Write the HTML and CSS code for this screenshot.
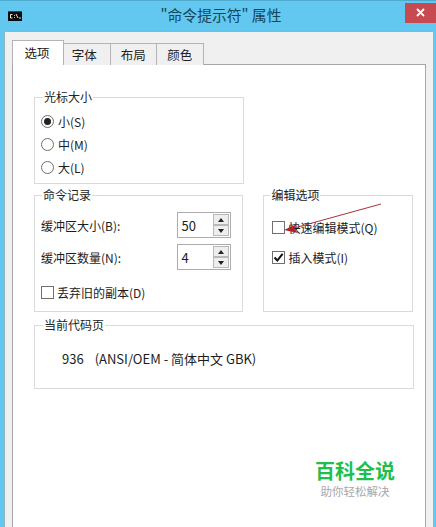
FILE: index.html
```html
<!DOCTYPE html>
<html lang="zh-CN">
<head>
<meta charset="utf-8">
<title>"命令提示符" 属性</title>
<link rel="stylesheet" href="styles.css">
</head>
<body>
<div class="window">
  <header class="titlebar">
    <svg class="app-icon" width="14" height="10" viewBox="0 0 14 10"><rect width="14" height="10" fill="#0b0b0b"/><rect width="14" height="1" fill="#3a4a55"/><path d="M4.500 3.500H2.500v3.500h2M6.500 4v.8M6.500 6v.8M8 3l2 4M11 7h2" fill="none" stroke="#e8e8e8" stroke-width="1"/></svg>
    <div class="title">"命令提示符" 属性</div>
    <div class="close"><svg width="9" height="9" viewBox="0 0 9 9"><path d="M1 1l7 7M8 1l-7 7" stroke="#fff" stroke-width="1.8"/></svg></div>
  </header>
  <div class="client">
    <nav class="tabs">
      <div class="tab active">选项</div>
      <div class="tab">字体</div>
      <div class="tab">布局</div>
      <div class="tab">颜色</div>
    </nav>
    <main class="page">
      <fieldset class="group cursor">
        <legend>光标大小</legend>
        <div class="opts">
          <label class="opt"><span class="radio on"></span>小(S)</label>
          <label class="opt"><span class="radio"></span>中(M)</label>
          <label class="opt"><span class="radio"></span>大(L)</label>
        </div>
      </fieldset>
      <div class="middle">
        <fieldset class="group history">
          <legend>命令记录</legend>
          <div class="field">
            <span class="field-label">缓冲区大小(B):</span>
            <div class="spin"><span class="spin-val">50</span><span class="spin-btns"><i class="up"></i><i class="down"></i></span></div>
          </div>
          <div class="field">
            <span class="field-label">缓冲区数量(N):</span>
            <div class="spin"><span class="spin-val">4</span><span class="spin-btns"><i class="up"></i><i class="down"></i></span></div>
          </div>
          <label class="check discard"><span class="box"></span>丢弃旧的副本(D)</label>
        </fieldset>
        <fieldset class="group edit">
          <legend>编辑选项</legend>
          <label class="check quick"><span class="box"></span>快速编辑模式(Q)</label>
          <label class="check insert"><span class="box"><svg width="11" height="11" viewBox="0 0 11 11"><path d="M1.500 5.500l2.800 3L9.600 1.800" fill="none" stroke="#111" stroke-width="2"/></svg></span>插入模式(I)</label>
        </fieldset>
      </div>
      <fieldset class="group codepage">
        <legend>当前代码页</legend>
        <div class="cp-text"><span class="cp-num">936</span>(ANSI/OEM - 简体中文 GBK)</div>
      </fieldset>
    </main>
  </div>
  <svg class="arrow" width="98" height="32" viewBox="0 0 98 32"><path d="M97 1L10 25" stroke="#a8323c" stroke-width="1" fill="none"/><path d="M0 27L13 21L10 25.500L14 30Z" fill="#b3202c"/></svg>
  <div class="mark">
    <div class="mark-title">百科全说</div>
    <div class="mark-sub">助你轻松解决</div>
  </div>
</div>
</body>
</html>
```
FILE: styles.css
```css
* { box-sizing: border-box; }
html, body { margin: 0; padding: 0; }
body {
  width: 436px;
  height: 527px;
  overflow: hidden;
  font-family: "Noto Sans CJK SC", "Noto Sans", sans-serif;
  font-size: 12px;
  color: #1c1c1c;
}
.window {
  position: relative;
  width: 436px;
  height: 527px;
  background: #62c8f0;
  display: flex;
  flex-direction: column;
  padding: 0 2px 0 4px;
  overflow: hidden;
}
.titlebar {
  height: 31px;
  flex: none;
  display: flex;
  align-items: center;
  position: relative;
  padding: 0 0 4px 8px;
  border-top: 1px solid #4fa9cf;
  margin: 0 -2px 0 -4px;
}
.app-icon { flex: none; margin-top: 4px; }
.title {
  flex: 1;
  text-align: center;
  font-size: 14.800px;
  color: #174558;
  padding: 0 0 0 15px;
  line-height: 20px;
  margin-top: 1px;
}
.close {
  width: 31px;
  height: 20px;
  margin-top: -3px;
  background: #c64a50;
  display: flex;
  align-items: center;
  justify-content: center;
  flex: none;
}
.client {
  flex: 1;
  min-height: 0;
  background: #f0f0f0;
  border-top: 1px solid #8fb4c4;
  border-left: 1px solid #8fb4c4;
  border-right: 1px solid #8fb4c4;
  display: flex;
  flex-direction: column;
  padding: 9px 7px 0 7px;
}
.tabs {
  display: flex;
  height: 24px;
  flex: none;
  align-items: flex-end;
  position: relative;
  z-index: 1;
  margin-bottom: -1px;
}
.tab {
  width: 46.500px;
  height: 22px;
  background: #f0f0f0;
  border: 1px solid #b4b4b4;
  border-left-width: 0;
  border-bottom: 0;
  text-align: center;
  font-size: 12.500px;
  line-height: 22px;
  color: #222;
}
.tab:nth-child(2) { padding-right: 5px; }
.tab.active {
  width: 52px;
  height: 25px;
  background: #fff;
  border-left-width: 1px;
  line-height: 24px;
  padding-right: 2px;
}
.page {
  flex: 1;
  min-height: 0;
  background: #fff;
  border: 1px solid #a6a6a6;
  border-bottom: 0;
  padding: 24px 12px 0 21px;
  display: flex;
  flex-direction: column;
}
.group {
  margin: 0;
  border: 1px solid #dadada;
  padding: 0;
  min-width: 0;
}
.group legend {
  padding: 0 1px;
  margin-left: 8px;
  font-size: 12px;
  line-height: 16px;
  color: #222;
}
.cursor {
  width: 210px;
  height: 95px;
}
.opts {
  display: flex;
  flex-direction: column;
  gap: 6px;
  padding: 8px 0 0 6px;
}
.opt {
  display: flex;
  align-items: center;
  height: 17px;
  gap: 4px;
}
.radio {
  width: 13px;
  height: 13px;
  border: 1px solid #6e6e6e;
  border-radius: 50%;
  background: #fff;
  display: flex;
  align-items: center;
  justify-content: center;
}
.radio.on::after {
  content: "";
  width: 7px;
  height: 7px;
  border-radius: 50%;
  background: #222;
}
.middle {
  display: flex;
  gap: 20px;
  margin-top: 3px;
}
.history {
  width: 210px;
  height: 125px;
  padding: 9px 11px 0 6px;
}
.group.history legend { margin-left: 1px; }
.edit {
  width: 150px;
  height: 125px;
  padding: 16px 0 0 8px;
}
.group.edit legend { margin-left: -2px; }
.field {
  display: flex;
  align-items: center;
  justify-content: space-between;
  height: 26px;
  margin-bottom: 6px;
}
.spin {
  width: 54px;
  height: 26px;
  border: 1px solid #acacac;
  display: flex;
  align-items: center;
  justify-content: space-between;
  padding: 1px 1px 1px 3px;
  font-size: 13px;
}
.spin-btns {
  width: 16px;
  height: 22px;
  display: flex;
  flex-direction: column;
}
.spin-btns i {
  flex: 1;
  background: #eeeeee;
  border: 1px solid #b8b8b8;
  display: flex;
  align-items: center;
  justify-content: center;
}
.spin-btns i::after {
  content: "";
  border-left: 3.500px solid transparent;
  border-right: 3.500px solid transparent;
}
.spin-btns .up::after { border-bottom: 4px solid #222; }
.spin-btns .down::after { border-top: 4px solid #222; }
.check {
  display: flex;
  align-items: center;
  gap: 3px;
  height: 17px;
}
.box {
  width: 13px;
  height: 13px;
  border: 1px solid #707070;
  background: #fff;
  display: flex;
  align-items: center;
  justify-content: center;
  flex: none;
}
.discard { margin-top: 14px; }
.insert { margin-top: 13px; }
.codepage {
  width: 380px;
  height: 72px;
  margin-top: 5px;
}
.cp-text {
  padding: 17px 0 0 27px;
  font-size: 13px;
  line-height: 18px;
}
.cp-num { margin-right: 11px; }
.arrow {
  position: absolute;
  left: 284px;
  top: 203px;
}
.mark {
  position: absolute;
  left: 315px;
  top: 458px;
  width: 80px;
  text-align: center;
}
.mark-title {
  font-size: 20px;
  line-height: 26px;
  font-weight: 700;
  color: #1fbf4e;
}
.mark-sub {
  font-size: 11.500px;
  line-height: 14px;
  color: #a8a8a8;
}
```
